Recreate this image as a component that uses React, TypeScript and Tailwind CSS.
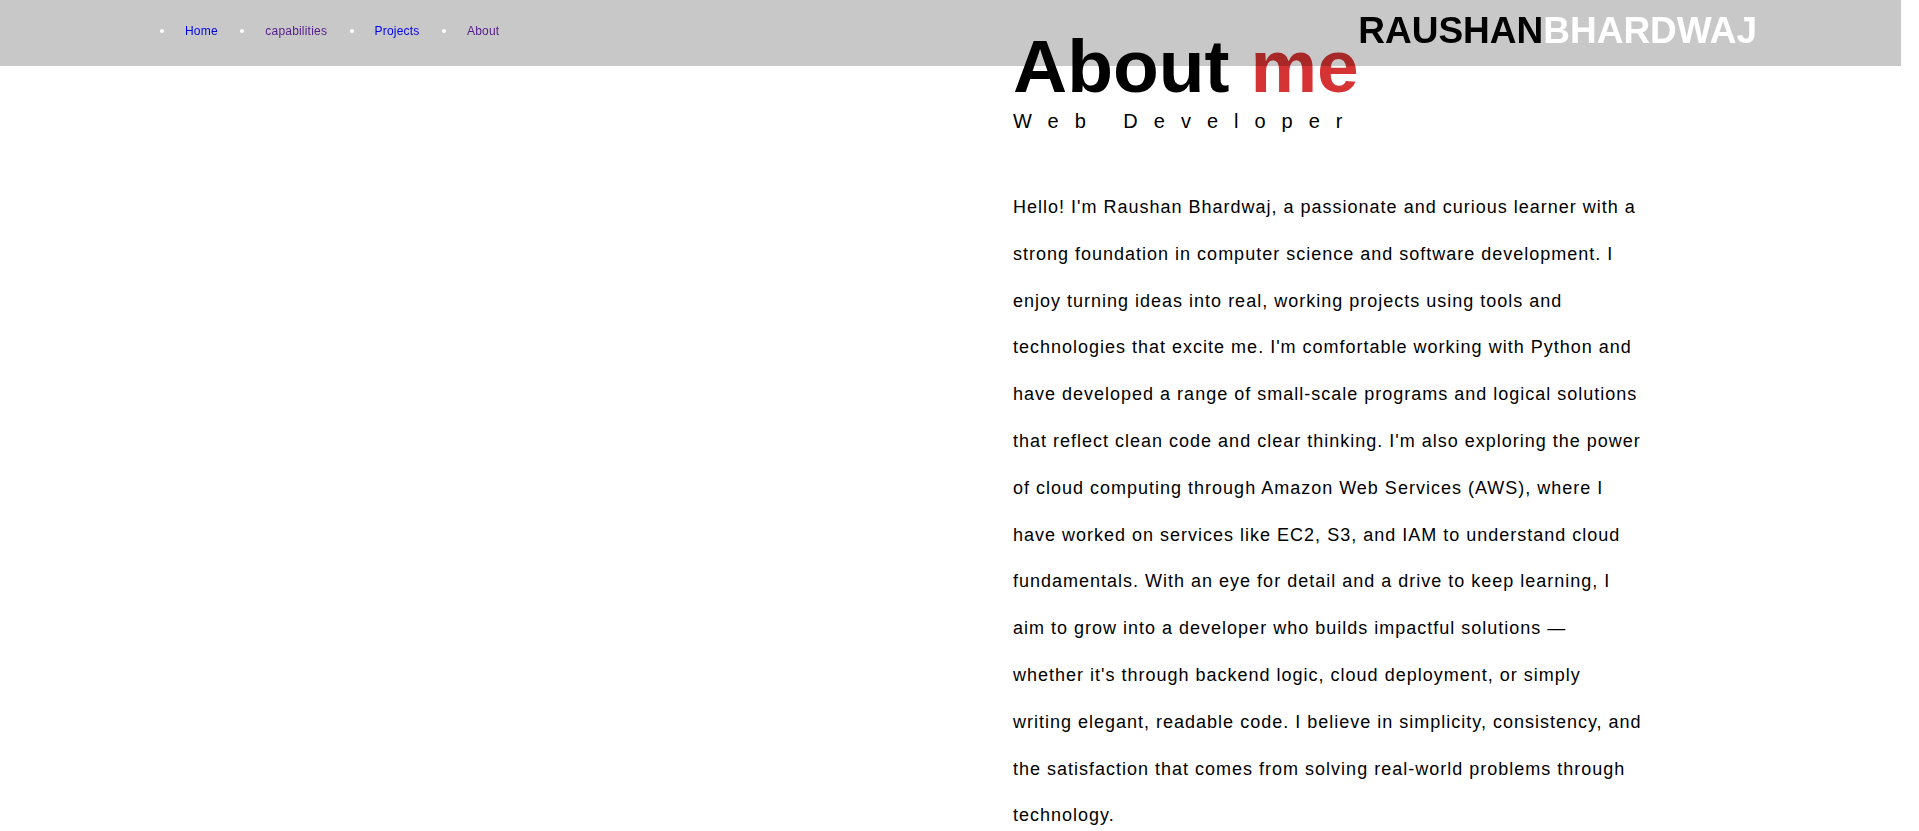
const NAV_LINKS = [
  { label: 'Home', href: '#home', visited: false },
  { label: 'capabilities', href: '#capabilities', visited: true },
  { label: 'Projects', href: '#projects', visited: false },
  { label: 'About', href: '#about', visited: true },
];

const ABOUT_TEXT =
  "Hello! I'm Raushan Bhardwaj, a passionate and curious learner with a strong foundation in computer science and software development. I enjoy turning ideas into real, working projects using tools and technologies that excite me. I'm comfortable working with Python and have developed a range of small-scale programs and logical solutions that reflect clean code and clear thinking. I'm also exploring the power of cloud computing through Amazon Web Services (AWS), where I have worked on services like EC2, S3, and IAM to understand cloud fundamentals. With an eye for detail and a drive to keep learning, I aim to grow into a developer who builds impactful solutions \u2014 whether it's through backend logic, cloud deployment, or simply writing elegant, readable code. I believe in simplicity, consistency, and the satisfaction that comes from solving real-world problems through technology.";

export default function App() {
  return (
    <div
      className="h-screen overflow-hidden bg-white pr-[18px] text-black"
      style={{ fontFamily: '"Liberation Sans", Arial, sans-serif' }}
    >
      {/* Header (translucent, sits over the page) */}
      <header className="sticky top-0 z-10 -mb-[66px] flex h-[66px] items-start justify-between bg-[rgba(0,0,0,0.216)]">
        <nav className="pl-[160px] pt-[25px]">
          <ul className="flex items-center gap-[22.5px] text-[12px] leading-none tracking-[0.2px]">
            {NAV_LINKS.map((link) => (
              <li key={link.label} className="flex items-center">
                <span className="mr-[21px] h-1 w-1 rounded-full bg-white" />
                <a
                  href={link.href}
                  className={link.visited ? 'text-[#551a8b]' : 'text-[#0000ee]'}
                >
                  {link.label}
                </a>
              </li>
            ))}
          </ul>
        </nav>
        <div className="pr-[144px] pt-[12px] text-[37px] font-bold leading-none">
          <span className="text-black">RAUSHAN</span>
          <span className="text-white">BHARDWAJ</span>
        </div>
      </header>

      {/* About */}
      <section id="about" className="flex">
        <div className="w-[1013px] shrink-0" />
        <div className="pt-[29px]">
          <h1 className="text-[75px] font-bold leading-none">
            About <span className="text-[#d63434]">me</span>
          </h1>
          <p className="mt-[7px] text-[20px] leading-none tracking-[16px]">Web Developer</p>
          <p className="mt-[53px] w-[629px] text-[18px] leading-[46.8px] tracking-[1px]">{ABOUT_TEXT}</p>
        </div>
      </section>
    </div>
  );
}
